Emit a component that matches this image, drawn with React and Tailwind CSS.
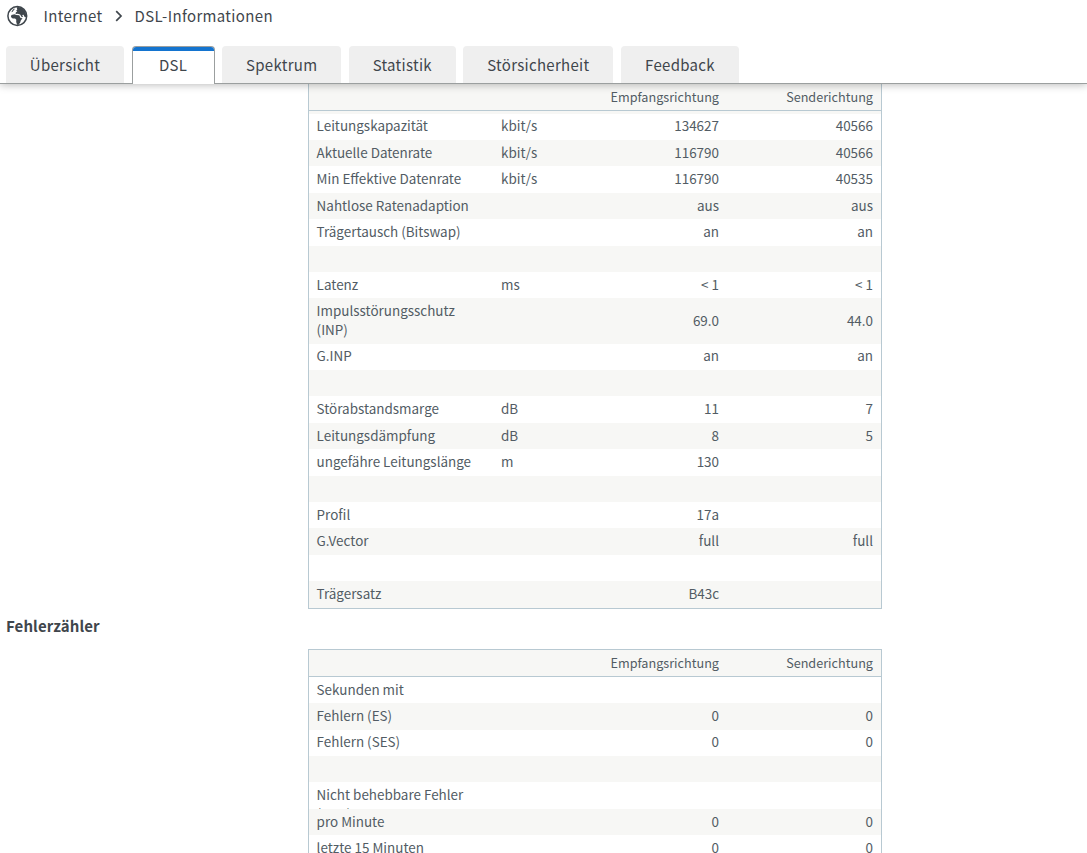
import React from "react";

const tabs = [
  { label: "Übersicht", width: "w-[118px]" },
  { label: "DSL", width: "w-[83px]", active: true },
  { label: "Spektrum", width: "w-[119px]" },
  { label: "Statistik", width: "w-[107px]" },
  { label: "Störsicherheit", width: "w-[150px]" },
  { label: "Feedback", width: "w-[118px]" },
];

const lineRows = [
  ["Leitungskapazität", "kbit/s", "134627", "40566"],
  ["Aktuelle Datenrate", "kbit/s", "116790", "40566"],
  ["Min Effektive Datenrate", "kbit/s", "116790", "40535"],
  ["Nahtlose Ratenadaption", "", "aus", "aus"],
  ["Trägertausch (Bitswap)", "", "an", "an"],
  ["", "", "", ""],
  ["Latenz", "ms", "< 1", "< 1"],
  ["Impulsstörungsschutz (INP)", "", "69.0", "44.0"],
  ["G.INP", "", "an", "an"],
  ["", "", "", ""],
  ["Störabstandsmarge", "dB", "11", "7"],
  ["Leitungsdämpfung", "dB", "8", "5"],
  ["ungefähre Leitungslänge", "m", "130", ""],
  ["", "", "", ""],
  ["Profil", "", "17a", ""],
  ["G.Vector", "", "full", "full"],
  ["", "", "", ""],
  ["Trägersatz", "", "B43c", ""],
];

const errorRows = [
  ["Sekunden mit", "", "", ""],
  ["Fehlern (ES)", "", "0", "0"],
  ["Fehlern (SES)", "", "0", "0"],
  ["", "", "", ""],
  ["Nicht behebbare Fehler (CRC)", "", "", ""],
  ["pro Minute", "", "0", "0"],
  ["letzte 15 Minuten", "", "0", "0"],
];

const GlobeIcon = () => (
  <svg viewBox="0 0 22 22" className="w-[22px] h-[22px] shrink-0">
    <circle cx="11.3" cy="11" r="9.4" fill="none" stroke="#3f464c" strokeWidth="1.5" />
    <path
      fill="#3f464c"
      d="M10.6 2.2 12.6 2l3.4 1.2 3 3 1.6 4-.8 2-1.6-.6-.6-1.9-1.5.3 1 1.6-1.3.6-1.7-2.6-2.3-.8-2.2.1.2-1.4 1.5-1.2-1.2-.5 1.2-1.2z"
    />
    <path
      fill="#3f464c"
      d="M5.4 10 8.4 9.2l2 .9 2.8.1 1.4 2.8 1.9.3-1.7 2.2-.7 2.2-1.8 2.2-1.2-.1-.9-2.8.1-2.3-1.2-1.2-2.4.1-1.8-1.6z"
    />
    <path fill="#3f464c" d="M6.4 5.2 8.2 3.6l.6.5-1.3 1.5-.8 1.1-1.4.5z" />
  </svg>
);

const HeadRow = () => (
  <div className="flex h-[27px] bg-[#f7f7f5] border-b border-[#b8c9d2] text-[12.65px] leading-[19px] px-2 pt-[3px]">
    <div className="flex-1 text-right">Empfangsrichtung</div>
    <div className="w-[154px] shrink-0 text-right">Senderichtung</div>
  </div>
);

const Row = ({ cells, shaded }) => {
  const [name, unit, down, up] = cells;
  const tall = name.endsWith("(INP)");
  return (
    <div
      className={`flex px-2 overflow-hidden ${tall ? "h-[45.3px]" : "h-[26.4px]"} ${
        shaded ? "bg-[#f7f7f5]" : "bg-white"
      }`}
    >
      <div className="w-[184px] pr-4 pt-[2.75px] -ml-[0.4px] mr-[0.4px]">{name}</div>
      <div className="w-[68px] pt-[2.75px]">{unit}</div>
      <div className={`flex-1 text-right ${tall ? "pt-[12.6px]" : "pt-[2.75px]"}`}>{down}</div>
      <div className={`w-[154px] text-right ${tall ? "pt-[12.6px]" : "pt-[2.75px]"}`}>{up}</div>
    </div>
  );
};

const App = () => {
  return (
    <div className="h-[853px] w-[1087px] overflow-hidden bg-white font-['Noto_Sans_CJK_SC',sans-serif] text-[#3f464c] flex flex-col">
      <header className="relative z-10 h-[84px] shrink-0 bg-white border-b border-[#9b9f9f] shadow-[0_1px_8px_rgba(0,0,0,0.27)] flex flex-col justify-between">
        <div className="flex items-center h-[32px] pl-[6px] text-[15px] leading-[20px] tracking-[0.35px]">
          <GlobeIcon />
          <span className="ml-[15.6px]">Internet</span>
          <svg viewBox="0 0 8 12" className="w-2 h-3 ml-[12.2px] mr-[11.9px]">
            <path d="M1.2 1.2 6 6 1.2 10.8" fill="none" stroke="#3f464c" strokeWidth="1.7" />
          </svg>
          <span>DSL-Informationen</span>
        </div>
        <nav className="flex gap-[7.6px] pl-[6px] h-[37px] text-[15px] leading-[20px] tracking-[0.3px]">
          {tabs.map((tab) =>
            tab.active ? (
              <div
                key={tab.label}
                className={`${tab.width} h-[38px] bg-white border border-b-0 border-[#9b9f9f] rounded-t-[4px] overflow-hidden flex flex-col`}
              >
                <div className="h-1 bg-[#1474cf]"></div>
                <div className="text-center pt-[4px]">{tab.label}</div>
              </div>
            ) : (
              <div
                key={tab.label}
                className={`${tab.width} bg-[#efefef] rounded-t-[4px] text-center pt-[9px]`}
              >
                {tab.label}
              </div>
            )
          )}
        </nav>
      </header>

      <main className="text-[13.45px] leading-[19px] text-[#525c64]">
        <section className="ml-[308px] w-[574px] border border-t-0 border-[#b8c9d2]">
          <HeadRow />
          <div className="h-[2.6px] bg-[#f7f7f5]"></div>
          {lineRows.map((cells, i) => (
            <Row key={i} cells={cells} shaded={i % 2 === 1} />
          ))}
        </section>

        <h2 className="pl-[6px] pt-[7px] h-[40.3px] text-[15px] leading-[20px] tracking-[0.1px] font-bold text-[#3f464c]">
          Fehlerzähler
        </h2>

        <section className="ml-[308px] w-[574px] border border-[#b8c9d2]">
          <HeadRow />
          {errorRows.map((cells, i) => (
            <Row key={i} cells={cells} shaded={i % 2 === 1} />
          ))}
        </section>
      </main>
    </div>
  );
};

export default App;
